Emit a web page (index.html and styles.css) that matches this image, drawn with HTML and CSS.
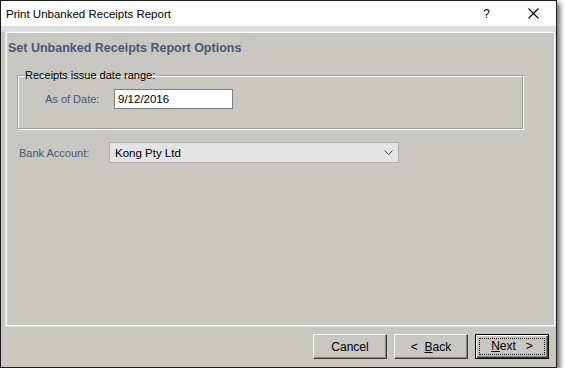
FILE: index.html
```html
<!DOCTYPE html>
<html lang="en">
<head>
    <meta charset="UTF-8">
    <title>Print Unbanked Receipts Report</title>
    <link rel="stylesheet" href="styles.css">
</head>
<body>

    <div class="window">
        <div class="titlebar">
            <span class="title">Print Unbanked Receipts Report</span>
            <span class="help">?</span>
            <span class="close">
                <svg width="11" height="11" viewBox="0 0 11 11">
                    <path d="M0.5 0.5 L10.5 10.5 M10.5 0.5 L0.5 10.5" stroke="#000" stroke-width="1.1" fill="none"/>
                </svg>
            </span>
        </div>

        <div class="client">
            <div class="panel">
                <h1>Set Unbanked Receipts Report Options</h1>

                <fieldset class="group">
                    <legend>Receipts issue date range:</legend>
                    <div class="row">
                        <label class="label date-label">As of Date:</label>
                        <input type="text" class="textbox" value="9/12/2016">
                    </div>
                </fieldset>

                <div class="row bank-row">
                    <label class="label bank-label">Bank Account:</label>
                    <div class="combo">
                        <span>Kong Pty Ltd</span>
                        <svg class="chevron" width="9" height="5" viewBox="0 0 9 5">
                            <path d="M0.5 0.5 L4.5 4.5 L8.5 0.5" stroke="#444" stroke-width="1" fill="none"/>
                        </svg>
                    </div>
                </div>
            </div>

            <div class="buttons">
                <button class="btn">Cancel</button>
                <button class="btn">&lt;&nbsp; <u>B</u>ack</button>
                <button class="btn default"><span class="focus"><u>N</u>ext&nbsp;&nbsp; &gt;</span></button>
            </div>
        </div>
    </div>

</body>
</html>
```

FILE: styles.css
```css
body {
    margin: 0;
    background-color: #fff;
    font-family: "Liberation Sans", Arial, sans-serif;
    font-size: 11px;
}
.window {
    width: 555px;
    height: 366px;
    border: 1px solid #1c1c1c;
    box-shadow: 3px 3px 5px rgba(0, 0, 0, 0.6);
    display: flex;
    flex-direction: column;
    background-color: #c8c7c2;
}
.titlebar {
    height: 25px;
    background-color: #fff;
    display: flex;
    align-items: center;
    flex-shrink: 0;
}
.title {
    font-size: 11.5px;
    padding-left: 5px;
    flex: 1;
    color: #000;
}
.help {
    font-size: 12px;
    width: 45px;
    text-align: center;
    margin-right: 1px;
}
.close {
    width: 46px;
    display: flex;
    justify-content: center;
}
.client {
    flex: 1;
    display: flex;
    flex-direction: column;
    border-top: 6px solid #dedede;
}
.panel {
    height: 292px;
    margin-left: 5px;
    margin-right: 1px;
    border: 1px solid #fff;
    box-shadow: 0 0 0 1px #e2e2e2;
}
h1 {
    margin: 8px 0 0 1px;
    font-size: 12.5px;
    font-weight: bold;
    color: #4b5777;
    line-height: 15px;
}
.group {
    margin: 13px 0 0 10px;
    width: 504px;
    height: 58px;
    padding: 0;
    border: 1px solid #a0a0a0;
    box-shadow: 1px 1px 0 #fff, inset 1px 1px 0 #fff;
    box-sizing: content-box;
}
.group legend {
    padding: 0 2px 0 1px;
    margin-left: 6px;
    color: #000;
    line-height: 12px;
}
.row {
    display: flex;
    align-items: center;
}
.group .row {
    margin-top: 8px;
}
.label {
    color: #4b5777;
}
.date-label {
    width: 69px;
    padding-left: 27px;
}
.textbox {
    width: 114px;
    height: 18px;
    border: 1px solid #7f7f7f;
    padding: 0 0 0 3px;
    margin: 0;
    font-family: "Liberation Sans", Arial, sans-serif;
    font-size: 11.5px;
    color: #000;
    background-color: #fff;
    box-sizing: content-box;
}
.bank-row {
    margin-top: 13px;
}
.bank-label {
    width: 90px;
    padding-left: 12px;
}
.combo {
    width: 283px;
    height: 19px;
    border: 1px solid #adadad;
    background-color: #e4e4e4;
    display: flex;
    align-items: center;
    padding-left: 5px;
    font-size: 11.5px;
    color: #000;
}
.combo span {
    flex: 1;
}
.chevron {
    margin-right: 5px;
}
.buttons {
    flex: 1;
    display: flex;
    justify-content: flex-end;
    align-items: flex-start;
    gap: 7px;
    padding: 8px 7px 0 0;
}
.btn {
    width: 74px;
    height: 25px;
    background-color: #c8c7c2;
    border: 1px solid;
    border-color: #fff #404040 #404040 #fff;
    box-shadow: inset -1px -1px 0 #808080;
    font-family: "Liberation Sans", Arial, sans-serif;
    font-size: 12px;
    color: #000;
    padding: 0;
    margin: 0;
}
.btn.default {
    border: 1px solid #000;
    box-shadow: inset 1px 1px 0 #fff, inset -1px -1px 0 #404040, inset -2px -2px 0 #808080;
    padding: 3px;
}
.focus {
    display: block;
    height: 15px;
    line-height: 15px;
    border: 1px dotted #000;
}
```
